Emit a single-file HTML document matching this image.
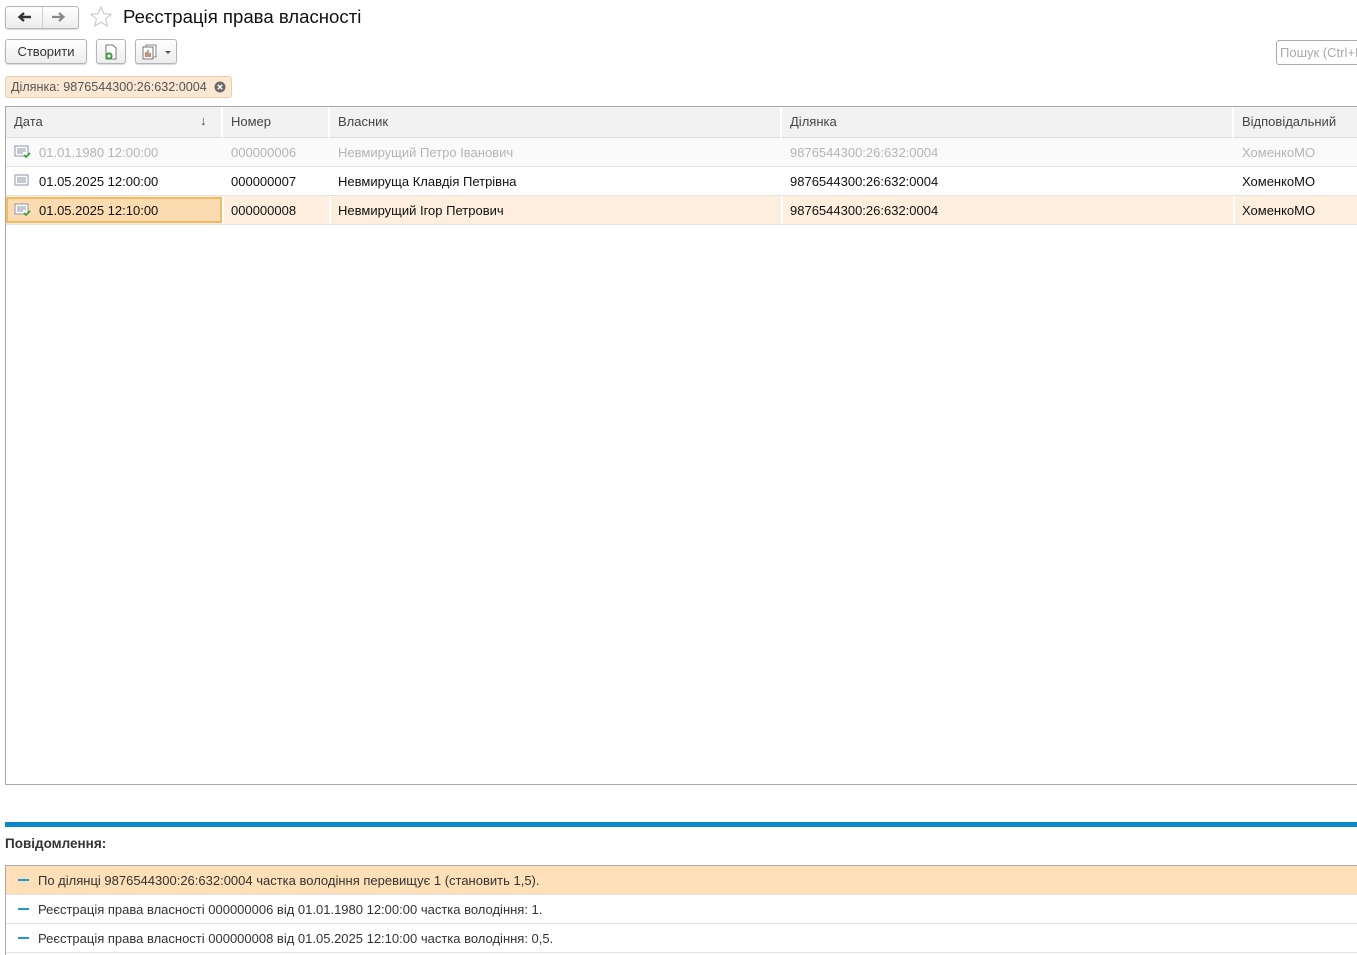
<!DOCTYPE html>
<html><head><meta charset="utf-8"><style>
*{box-sizing:border-box;margin:0;padding:0}
body{width:1357px;height:952px;overflow:hidden;background:#fff;font-family:"Liberation Sans",Arial,sans-serif;font-size:13px;color:#333;position:relative}
.a{position:absolute}
.btn{position:absolute;border:1px solid #b5b5b5;border-radius:3px;background:linear-gradient(#fff,#ececec);box-shadow:0 1px 1px rgba(0,0,0,.15)}
.tbl{left:5px;top:106px;width:1360px;height:679px;border:1px solid #a8a8a8}
.hd{position:absolute;top:0;height:31px;background:#f2f2f2;border-bottom:1px solid #ddd;border-right:2px solid #fff;line-height:30px;padding-left:8px;color:#444}
.row{position:absolute;left:0;width:1360px;height:29px;border-bottom:1px solid #e4e4e4;line-height:29px}
.c{position:absolute;top:0;height:28px;padding-left:8px;white-space:nowrap}
.sep{position:absolute;top:0;width:2px;height:28px;background:#fff}
.msg{position:absolute;left:0;width:1360px;height:29px;border-bottom:1px solid #e2e2e2;line-height:30px;padding-left:32px;color:#333}
.msg:before{content:"";position:absolute;left:12px;top:13px;width:11px;height:2px;background:#1a9ad6}
</style></head><body>
<div class="btn" style="left:5px;top:6px;width:74px;height:23px"></div>
<div class="a" style="left:42px;top:7px;width:1px;height:21px;background:#ccc"></div>
<svg class="a" style="left:16px;top:11px" width="16" height="12"><path d="M15 6H4M8 2L3.5 6 8 10" stroke="#333" stroke-width="2.4" fill="none"/></svg>
<svg class="a" style="left:51px;top:11px" width="16" height="12"><path d="M1 6H12M8 2L12.5 6 8 10" stroke="#888" stroke-width="2.2" fill="none"/></svg>
<svg class="a" style="left:89px;top:5px" width="24" height="24"><path d="M12 2l2.9 6.6 7.1.7-5.4 4.7 1.6 7-6.2-3.7-6.2 3.7 1.6-7L2 9.3l7.1-.7z" fill="none" stroke="#c8c8c8" stroke-width="1.1"/></svg>
<div class="a" style="left:123px;top:6px;font-size:18.6px;color:#111">Реєстрація права власності</div>
<div class="btn" style="left:5px;top:39px;width:82px;height:25px;text-align:center;line-height:24px;color:#333">Створити</div>
<div class="btn" style="left:96px;top:39px;width:30px;height:25px"></div>
<svg class="a" style="left:102px;top:43px" width="18" height="18"><path d="M4 2h7l3 3v11H4z" fill="#fff" stroke="#777"/><circle cx="7" cy="13" r="3.6" fill="#2e9b3a"/><path d="M7 11v4M5 13h4" stroke="#fff" stroke-width="1.3"/></svg>
<div class="btn" style="left:135px;top:39px;width:42px;height:25px"></div>
<svg class="a" style="left:141px;top:43px" width="18" height="18"><rect x="5" y="2" width="10" height="12" fill="#fff" stroke="#888"/><rect x="2" y="4" width="10" height="12" fill="#fff" stroke="#777"/><path d="M5 14V9M7 14V7M9 14V10" stroke="#d33" stroke-width="1.3"/><path d="M7 14V7" stroke="#3a3"/></svg>
<div class="a" style="left:165px;top:51px;border:3px solid transparent;border-top:3px solid #555"></div>
<div class="a" style="left:1276px;top:40px;width:90px;height:25px;border:1px solid #aaa;border-radius:3px;color:#aaa;line-height:23px;padding-left:3px;font-size:13px;white-space:nowrap">Пошук (Ctrl+F)</div>
<div class="a" style="left:5px;top:76px;width:227px;height:22px;background:#fbe7d2;border:1px solid #ebcfae;border-radius:3px;line-height:21px;padding-left:5px;color:#555;white-space:nowrap;font-size:12.6px">Ділянка: 9876544300:26:632:0004</div>
<svg class="a" style="left:214px;top:81px" width="12" height="12"><circle cx="6" cy="6" r="5.5" fill="#6b6b6b"/><path d="M3.8 3.8l4.4 4.4M8.2 3.8l-4.4 4.4" stroke="#fff" stroke-width="1.4"/></svg>
<div class="a tbl">
<div class="hd" style="left:0;width:217px">Дата<span style="position:absolute;left:194px;top:-1px">↓</span></div>
<div class="hd" style="left:217px;width:107px">Номер</div>
<div class="hd" style="left:324px;width:452px">Власник</div>
<div class="hd" style="left:776px;width:452px">Ділянка</div>
<div class="hd" style="left:1228px;width:140px">Відповідальний</div>
<div class="row" style="top:31px;background:#fafafa;color:#b5b5b5">
<svg class="c" style="left:8px;top:7px;padding:0" width="18" height="14"><rect x="1" y="1" width="13" height="10" fill="#fff" stroke="#8a96a8"/><path d="M3 4h9M3 6h9M3 8h6" stroke="#8a96a8"/><path d="M10 10l2 2 4-4" stroke="#3aa13a" stroke-width="1.8" fill="none"/></svg>
<div class="c" style="left:25px">01.01.1980 12:00:00</div><div class="c" style="left:217px">000000006</div><div class="c" style="left:324px">Невмирущий Петро Іванович</div><div class="c" style="left:776px">9876544300:26:632:0004</div><div class="c" style="left:1228px">ХоменкоМО</div></div>
<div class="row" style="top:60px;color:#111">
<svg class="c" style="left:8px;top:7px;padding:0" width="18" height="14"><rect x="1" y="1" width="13" height="10" fill="#fff" stroke="#8a96a8"/><path d="M3 4h9M3 6h9M3 8h9" stroke="#8a96a8"/></svg>
<div class="c" style="left:25px">01.05.2025 12:00:00</div><div class="c" style="left:217px">000000007</div><div class="c" style="left:324px">Невмируща Клавдія Петрівна</div><div class="c" style="left:776px">9876544300:26:632:0004</div><div class="c" style="left:1228px">ХоменкоМО</div></div>
<div class="row" style="top:89px;background:#fdeedd;color:#111">
<div class="a" style="left:0;top:1px;width:216px;height:26px;background:#fbdcb0;border:2px solid #f5b960"></div>
<div class="sep" style="left:216px"></div><div class="sep" style="left:323px"></div><div class="sep" style="left:775px"></div><div class="sep" style="left:1227px"></div>
<svg class="c" style="left:8px;top:7px;padding:0" width="18" height="14"><rect x="1" y="1" width="13" height="10" fill="#fff" stroke="#8a96a8"/><path d="M3 4h9M3 6h9M3 8h6" stroke="#8a96a8"/><path d="M10 10l2 2 4-4" stroke="#3aa13a" stroke-width="1.8" fill="none"/></svg>
<div class="c" style="left:25px">01.05.2025 12:10:00</div><div class="c" style="left:217px">000000008</div><div class="c" style="left:324px">Невмирущий Ігор Петрович</div><div class="c" style="left:776px">9876544300:26:632:0004</div><div class="c" style="left:1228px">ХоменкоМО</div></div>
</div>
<div class="a" style="left:5px;top:822px;width:1360px;height:5px;background:#0a88cc"></div>
<div class="a" style="left:5px;top:836px;font-weight:bold;color:#333;font-size:13.5px">Повідомлення:</div>
<div class="a" style="left:5px;top:865px;width:1360px;height:90px;border:1px solid #aaa;border-bottom:none">
<div class="msg" style="top:0;background:#fde0b7">По ділянці 9876544300:26:632:0004 частка володіння перевищує 1 (становить 1,5).</div>
<div class="msg" style="top:29px">Реєстрація права власності 000000006 від 01.01.1980 12:00:00 частка володіння: 1.</div>
<div class="msg" style="top:58px">Реєстрація права власності 000000008 від 01.05.2025 12:10:00 частка володіння: 0,5.</div>
</div>
</body></html>
